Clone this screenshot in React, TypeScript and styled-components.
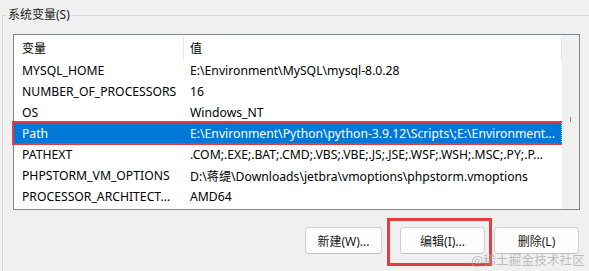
import React from "react";
import styled, { createGlobalStyle } from "styled-components";

const Global = createGlobalStyle`
  html, body {
    margin: 0;
    padding: 0;
    width: 589px;
    height: 271px;
    overflow: hidden;
    background: #f0f0f0;
    font-family: "Noto Sans", "Noto Sans CJK SC", sans-serif;
    color: #000;
  }
`;

const Page = styled.div`
  position: relative;
  width: 589px;
  height: 271px;
  overflow: hidden;
  padding-top: 7px;
  box-sizing: border-box;
`;

const Group = styled.fieldset`
  margin: 0 0 0 2px;
  padding: 11px 0 0 10px;
  width: 620px;
  min-height: 300px;
  box-sizing: border-box;
  border: 1px solid #d9d9d9;
  border-right: none;
`;

const Legend = styled.legend`
  padding: 0 2px 0 2px;
  margin-left: -7px;
  font-size: 12px;
  line-height: 16px;
  font-family: "Noto Sans", "Noto Sans CJK SC", sans-serif;
  color: #1a1a1a;
`;

const ListBox = styled.div`
  width: 567px;
  height: 176px;
  box-sizing: border-box;
  border: 1px solid #828790;
  background: #fff;
  display: flex;
`;

const ListBody = styled.div`
  width: 548px;
  display: flex;
  flex-direction: column;
`;

const HeaderRow = styled.div`
  height: 25px;
  display: flex;
  align-items: stretch;
`;

const HeaderCell = styled.div<{ $w?: number }>`
  ${(p) => (p.$w ? `width: ${p.$w}px;` : "flex: 1;")}
  box-sizing: border-box;
  padding: 0 0 0 ${(p) => (p.$w ? 8 : 6)}px;
  display: flex;
  align-items: center;
  font-size: 12px;
  border-right: 1px solid #e5e5e5;
  margin: 1px 0 0 0;
`;

const Row = styled.div<{ $selected?: boolean }>`
  position: relative;
  height: 21px;
  display: flex;
  align-items: center;
  font-size: 12.2px;
  background: ${(p) => (p.$selected ? "#0078d7" : "transparent")};
  color: ${(p) => (p.$selected ? "#fff" : "#000")};
  box-sizing: border-box;
  border-right: 1px dotted ${(p) => (p.$selected ? "#b7d6f3" : "transparent")};
`;

const Cell = styled.div<{ $w?: number }>`
  ${(p) => (p.$w ? `width: ${p.$w}px;` : "flex: 1; min-width: 0;")}
  box-sizing: border-box;
  padding: 0 ${(p) => (p.$w ? "4px 0 8px" : "0 0 6px")};
  white-space: nowrap;
  overflow: hidden;
  text-overflow: ellipsis;
`;

const ScrollTrack = styled.div`
  width: 17px;
  background: #f0f0f0;
  position: relative;
`;

const Thumb = styled.div`
  position: absolute;
  left: 8px;
  top: 82px;
  width: 1px;
  height: 5px;
  background: #8a8a8a;
`;

const ButtonRow = styled.div`
  width: 567px;
  display: flex;
  justify-content: flex-end;
  margin-top: 17px;
`;

const Button = styled.button<{ $w: number; $gap: number }>`
  position: relative;
  width: ${(p) => p.$w}px;
  height: 27px;
  margin-right: ${(p) => p.$gap}px;
  box-sizing: border-box;
  border: 1px solid #d0d0d0;
  border-bottom-color: #c2c2c2;
  border-radius: 4px;
  background: #fdfdfd;
  font-family: "Noto Sans", "Noto Sans CJK SC", sans-serif;
  font-size: 12px;
  color: #1a1a1a;
  padding: 0;
`;

const Annot = styled.div<{ $l: number; $t: number; $w: number; $h: number; $b: number }>`
  position: absolute;
  left: ${(p) => p.$l}px;
  top: ${(p) => p.$t}px;
  width: ${(p) => p.$w}px;
  height: ${(p) => p.$h}px;
  box-sizing: border-box;
  border: ${(p) => p.$b}px solid #e53c40;
  pointer-events: none;
`;

const Watermark = styled.div`
  position: absolute;
  right: 4px;
  bottom: 3px;
  font-family: "Noto Sans CJK SC", sans-serif;
  font-size: 12.5px;
  line-height: 16px;
  color: rgba(170, 170, 170, 0.75);
  letter-spacing: 0.2px;
`;

const rows: [string, string][] = [
  ["MYSQL_HOME", "E:\\Environment\\MySQL\\mysql-8.0.28"],
  ["NUMBER_OF_PROCESSORS", "16"],
  ["OS", "Windows_NT"],
  ["Path", "E:\\Environment\\Python\\python-3.9.12\\Scripts\\;E:\\Environment..."],
  ["PATHEXT", ".COM;.EXE;.BAT;.CMD;.VBS;.VBE;.JS;.JSE;.WSF;.WSH;.MSC;.PY;.P..."],
  ["PHPSTORM_VM_OPTIONS", "D:\\蒋缇\\Downloads\\jetbra\\vmoptions\\phpstorm.vmoptions"],
  ["PROCESSOR_ARCHITECT...", "AMD64"],
];

export default function App() {
  return (
    <Page>
      <Global />
      <Group>
        <Legend>系统变量(S)</Legend>
        <ListBox>
          <ListBody>
            <HeaderRow>
              <HeaderCell $w={170}>变量</HeaderCell>
              <HeaderCell>值</HeaderCell>
            </HeaderRow>
            {rows.map(([k, v]) => (
              <Row key={k} $selected={k === "Path"}>
                <Cell $w={170}>{k}</Cell>
                <Cell>{v}</Cell>
                {k === "Path" && <Annot $l={-2} $t={-2} $w={560} $h={24} $b={2} />}
              </Row>
            ))}
          </ListBody>
          <ScrollTrack>
            <Thumb />
          </ScrollTrack>
        </ListBox>
        <ButtonRow>
          <Button $w={77} $gap={18}>新建(W)...</Button>
          <Button $w={85} $gap={9}>
            编辑(I)...
            <Annot $l={-14} $t={-10} $w={105} $h={48} $b={3} />
          </Button>
          <Button $w={85} $gap={1}>删除(L)</Button>
        </ButtonRow>
      </Group>
      <Watermark>@稀土掘金技术社区</Watermark>
    </Page>
  );
}
